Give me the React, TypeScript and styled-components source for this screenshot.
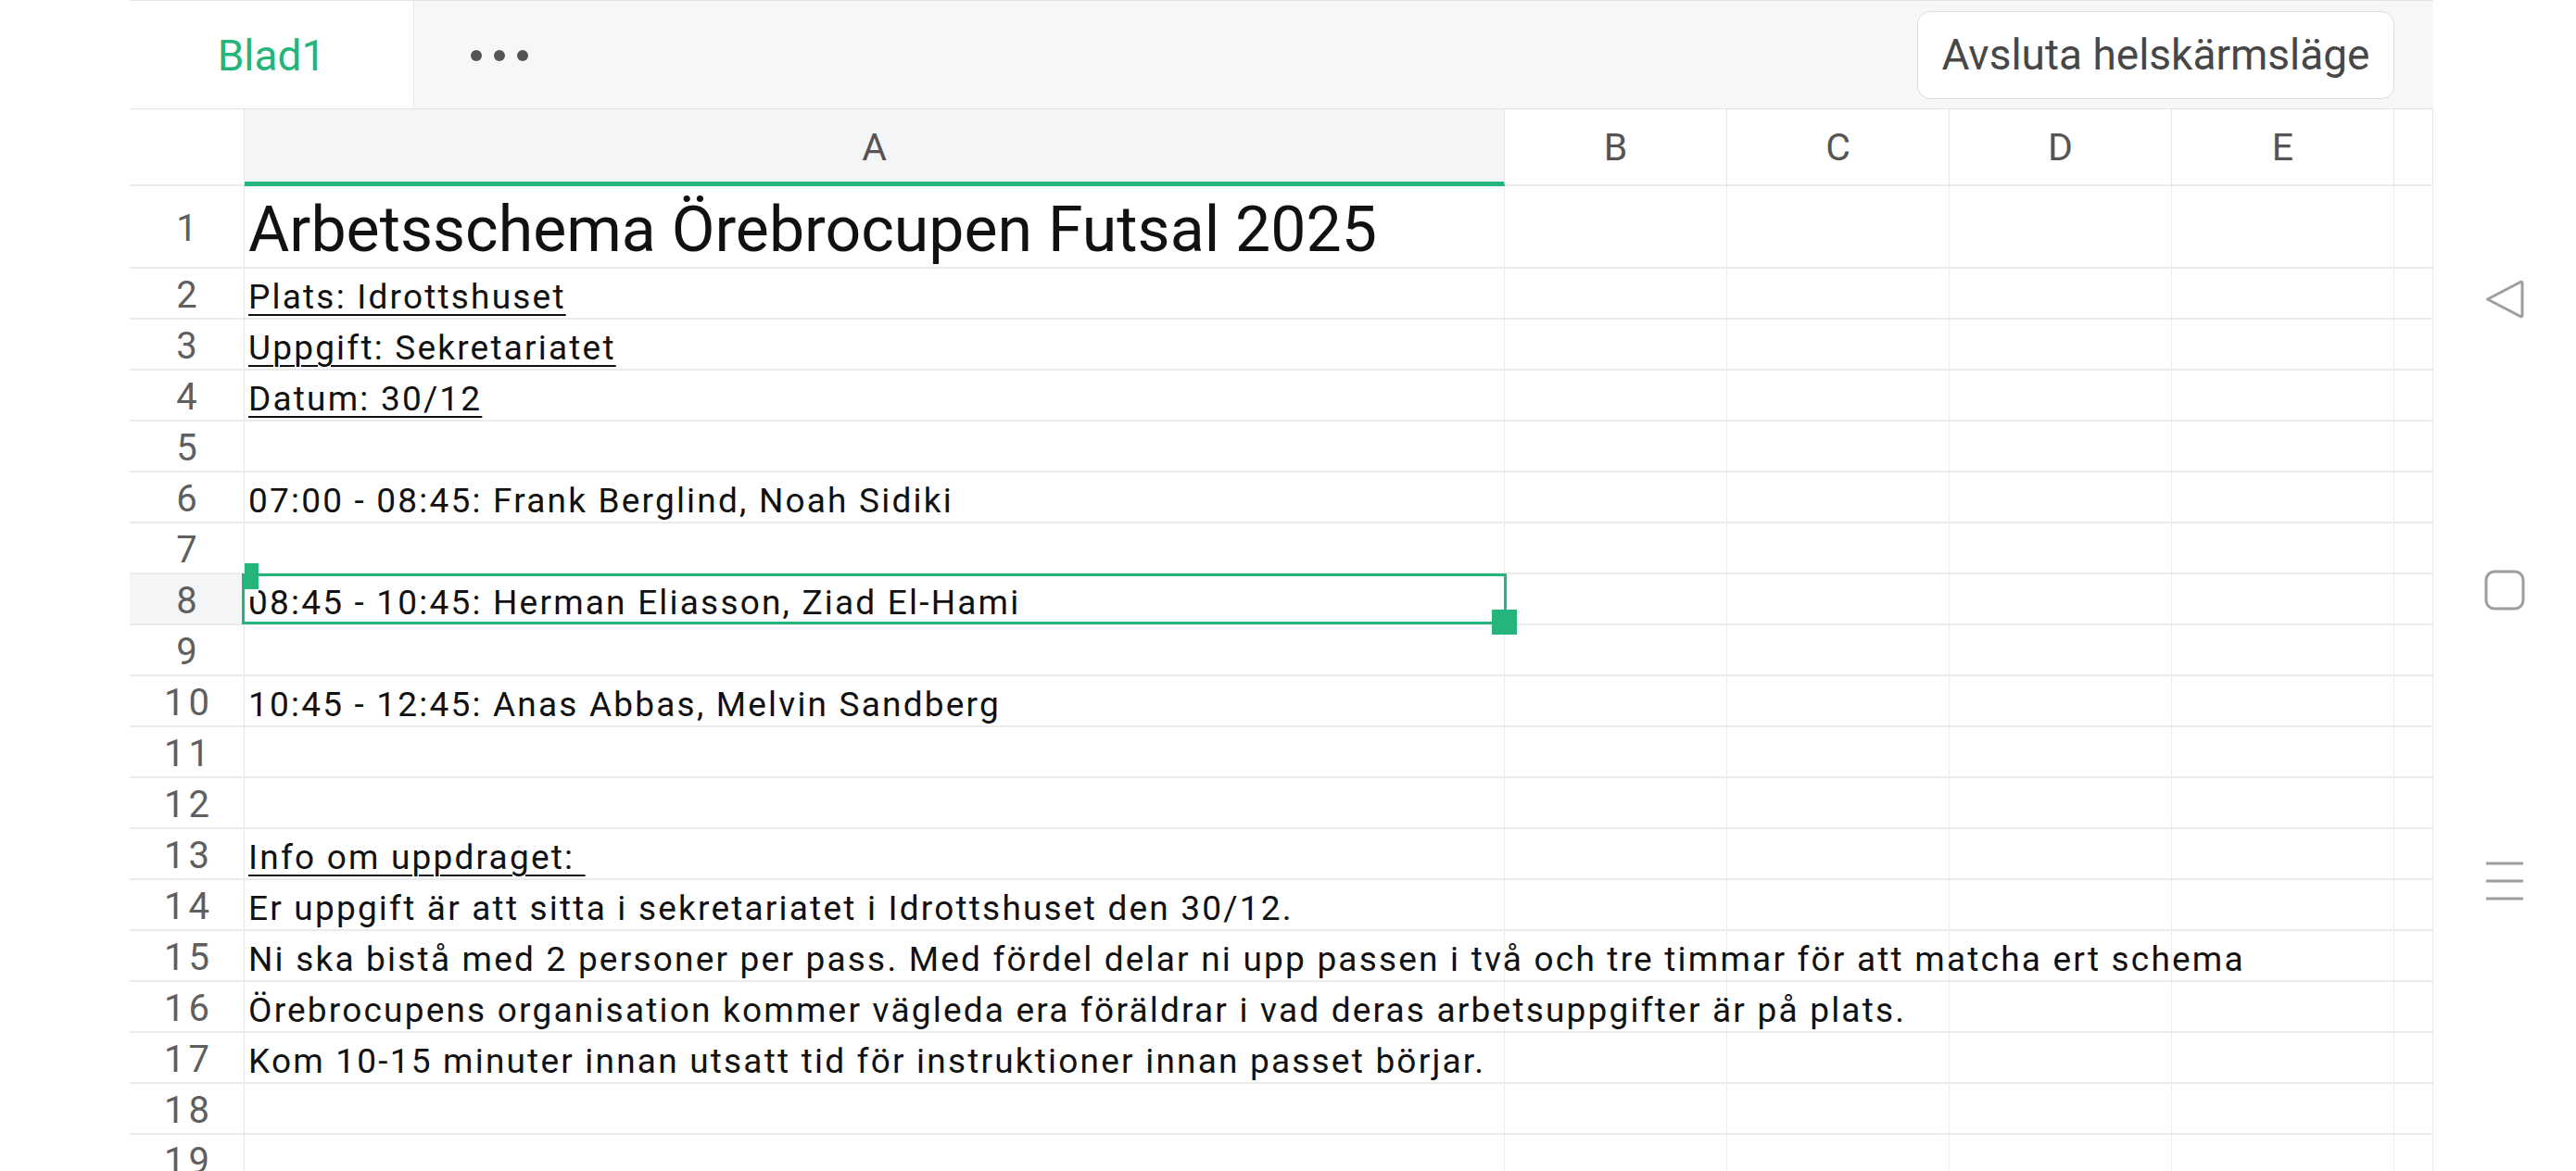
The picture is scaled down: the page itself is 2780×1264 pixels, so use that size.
import React from "react";
import styled, {createGlobalStyle} from "styled-components";

const GREEN = '#25b47b';

const GlobalStyle = createGlobalStyle`
  html, body {
    margin: 0;
    padding: 0;
    background: #ffffff;
  }
  body {
    font-family: Roboto, "Noto Sans", "Liberation Sans", sans-serif;
  }
`;

const Page = styled.div`
  display: flex;
  width: 2780px;
  height: 1264px;
  overflow: hidden;
  background: #ffffff;
`;

const Gutter = styled.div`
  width: 140px;
  flex-shrink: 0;
`;

const Sheet = styled.div`
  width: 2486px;
  flex-shrink: 0;
  display: flex;
  flex-flow: column;
`;

const TopBar = styled.div`
  height: 116px;
  flex-shrink: 0;
  display: flex;
  align-items: stretch;
  background: #f7f7f7;
  border-top: 1px solid #e3e3e3;
  border-bottom: 1px solid #e3e3e3;
`;

const Tab = styled.div`
  width: 306px;
  background: #ffffff;
  border-right: 1px solid #e8e8e8;
  display: flex;
  align-items: center;
  justify-content: center;
  color: ${GREEN};
  font-size: 46px;
  padding-top: 2px;
`;

const Dots = styled.div`
  display: flex;
  align-items: center;
  gap: 13px;
  margin-left: 61px;
  padding-top: 2px;

  & span {
    width: 12px;
    height: 12px;
    border-radius: 50%;
    background: #555555;
  }
`;

const Spacer = styled.div`
  flex: 1;
`;

const ExitButton = styled.div`
  align-self: center;
  margin: 0 42px 0 0;
  height: 95px;
  width: 515px;
  box-sizing: border-box;
  display: flex;
  align-items: center;
  justify-content: center;
  background: #ffffff;
  border: 1px solid #dcdcdc;
  border-radius: 14px;
  color: #474747;
  font-size: 46px;
`;

const Grid = styled.div`
  display: grid;
  grid-template-columns: 124px 1360px 240px 240px 240px 240px 42px;
  grid-template-rows: 83px 89px repeat(18, 55px);
`;

const Corner = styled.div`
  border-right: 1px solid #e6e6e6;
  border-bottom: 2px solid #ebebeb;
`;

const ColHead = styled.div<{ $active?: boolean }>`
  display: flex;
  align-items: center;
  justify-content: center;
  font-size: 41px;
  color: #555555;
  background: ${p => p.$active ? '#f4f5f7' : '#ffffff'};
  border-right: 1px solid #e6e6e6;
  border-bottom: ${p => p.$active ? `5px solid ${GREEN}` : '2px solid #ebebeb'};
  padding-top: ${p => p.$active ? '3px' : '0'};
`;

const RowHead = styled.div<{ $active?: boolean }>`
  display: flex;
  align-items: center;
  justify-content: center;
  font-size: 40px;
  letter-spacing: 4px;
  color: #5f5f5f;
  padding: 4px 0 0 4px;
  background: ${p => p.$active ? '#f4f5f7' : '#ffffff'};
  border-right: 1px solid #e6e6e6;
  border-bottom: 2px solid #ebebeb;
`;

const Cell = styled.div`
  position: relative;
  display: flex;
  align-items: flex-end;
  padding-left: 4px;
  border-right: 1px solid #ececec;
  border-bottom: 2px solid #ebebeb;
  white-space: pre;
  overflow: visible;
`;

const CellText = styled.span<{ $title?: boolean; $underline?: boolean }>`
  position: relative;
  z-index: 1;
  font-size: ${p => p.$title ? '68px' : '37px'};
  line-height: ${p => p.$title ? '80px' : '44px'};
  letter-spacing: ${p => p.$title ? '0' : '2.2px'};
  color: #111111;
  text-decoration: ${p => p.$underline ? 'underline' : 'none'};
  text-decoration-thickness: 2px;
  text-underline-offset: 6px;
`;

const Selection = styled.div`
  position: absolute;
  left: -3px;
  top: -1px;
  right: -3px;
  bottom: -1px;
  border: 3px solid ${GREEN};
  z-index: 2;
  pointer-events: none;
`;

const StartHandle = styled.div`
  position: absolute;
  left: 0;
  top: -14px;
  width: 15px;
  height: 36px;
  background: linear-gradient(${GREEN} 0, ${GREEN} 28px, #ffffff 28px);
`;

const EndHandle = styled.div`
  position: absolute;
  right: -14px;
  bottom: -14px;
  width: 27px;
  height: 27px;
  background: ${GREEN};
`;

const NavBar = styled.div`
  width: 154px;
  flex-shrink: 0;
  display: flex;
  flex-flow: column;
  align-items: center;
  justify-content: center;
  gap: 270px;
  padding-top: 10px;
  box-sizing: border-box;
`;

const NavIcon = styled.svg`
  width: 44px;
  height: 44px;
  display: block;
`;

type Row = { text?: string; title?: boolean; underline?: boolean };

const rows: Row[] = [
    {text: 'Arbetsschema Örebrocupen Futsal 2025', title: true},
    {text: 'Plats: Idrottshuset', underline: true},
    {text: 'Uppgift: Sekretariatet', underline: true},
    {text: 'Datum: 30/12', underline: true},
    {},
    {text: '07:00 - 08:45: Frank Berglind, Noah Sidiki'},
    {},
    {text: '08:45 - 10:45: Herman Eliasson, Ziad El-Hami'},
    {},
    {text: '10:45 - 12:45: Anas Abbas, Melvin Sandberg'},
    {},
    {},
    {text: 'Info om uppdraget: ', underline: true},
    {text: 'Er uppgift är att sitta i sekretariatet i Idrottshuset den 30/12.'},
    {text: 'Ni ska bistå med 2 personer per pass. Med fördel delar ni upp passen i två och tre timmar för att matcha ert schema'},
    {text: 'Örebrocupens organisation kommer vägleda era föräldrar i vad deras arbetsuppgifter är på plats.'},
    {text: 'Kom 10-15 minuter innan utsatt tid för instruktioner innan passet börjar.'},
    {},
    {},
];

const columns = ['A', 'B', 'C', 'D', 'E', ''];
const SELECTED_ROW = 8;

export default function App() {
    return <Page>
        <GlobalStyle/>
        <Gutter/>
        <Sheet>
            <TopBar>
                <Tab>Blad1</Tab>
                <Dots><span/><span/><span/></Dots>
                <Spacer/>
                <ExitButton>Avsluta helskärmsläge</ExitButton>
            </TopBar>
            <Grid>
                <Corner/>
                {columns.map((c, i) => <ColHead key={i} $active={c === 'A'}>{c}</ColHead>)}
                {rows.map((row, i) => {
                    const n = i + 1;
                    return <React.Fragment key={n}>
                        <RowHead $active={n === SELECTED_ROW}>{n}</RowHead>
                        <Cell>
                            {row.text && <CellText $title={row.title} $underline={row.underline}>{row.text}</CellText>}
                            {n === SELECTED_ROW && <Selection>
                                <StartHandle/>
                                <EndHandle/>
                            </Selection>}
                        </Cell>
                        {columns.slice(1).map((c, j) => <Cell key={j}/>)}
                    </React.Fragment>
                })}
            </Grid>
        </Sheet>
        <NavBar>
            <NavIcon viewBox="0 0 44 44" fill="none" stroke="#9e9e9e" strokeWidth="3" strokeLinejoin="round">
                <path d="M3.5 22 L39 3.5 Q41 2.8 41 5 L41 39 Q41 41.2 39 40.5 Z"/>
            </NavIcon>
            <NavIcon viewBox="0 0 44 44" fill="none" stroke="#9e9e9e" strokeWidth="3">
                <rect x="2" y="2" width="40" height="40" rx="9"/>
            </NavIcon>
            <NavIcon viewBox="0 0 44 44" fill="none" stroke="#9e9e9e" strokeWidth="3">
                <path d="M2 3 H42 M2 22 H42 M2 41 H42"/>
            </NavIcon>
        </NavBar>
    </Page>
}
